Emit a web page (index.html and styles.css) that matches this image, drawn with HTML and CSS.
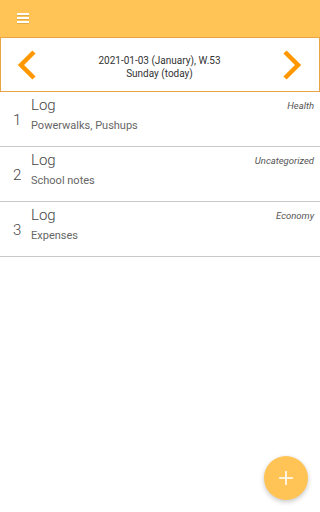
FILE: index.html
```html
<!DOCTYPE html>
<html>
<head>
<meta charset="utf-8">
<link rel="stylesheet" href="styles.css">
</head>
<body>
<header class="appbar">
  <span class="menu"><i></i><i></i><i></i></span>
</header>
<section class="datebar">
  <svg class="chev" width="24" height="32" viewBox="0 0 24 32"><polyline points="19,3 6,16 19,29" fill="none" stroke="#FF9800" stroke-width="4.5"/></svg>
  <div class="date">
    <div>2021-01-03 (January), W.53</div>
    <div>Sunday (today)</div>
  </div>
  <svg class="chev" width="24" height="32" viewBox="0 0 24 32"><polyline points="5,3 18,16 5,29" fill="none" stroke="#FF9800" stroke-width="4.5"/></svg>
</section>
<ul class="list">
  <li class="item">
    <span class="num">1</span>
    <div class="body">
      <div class="title">Log</div>
      <div class="sub">Powerwalks, Pushups</div>
    </div>
    <span class="cat">Health</span>
  </li>
  <li class="item">
    <span class="num">2</span>
    <div class="body">
      <div class="title">Log</div>
      <div class="sub">School notes</div>
    </div>
    <span class="cat">Uncategorized</span>
  </li>
  <li class="item">
    <span class="num">3</span>
    <div class="body">
      <div class="title">Log</div>
      <div class="sub">Expenses</div>
    </div>
    <span class="cat">Economy</span>
  </li>
</ul>
<button class="fab"><svg width="14" height="14" viewBox="0 0 14 14"><path d="M7 0V14M0 7H14" stroke="#fff" stroke-width="1.6"/></svg></button>
</body>
</html>
```
FILE: styles.css
```css
* { box-sizing: border-box; }
html, body { margin: 0; padding: 0; }
body {
  width: 320px;
  height: 512px;
  background: #fff;
  font-family: Roboto, "Liberation Sans", sans-serif;
  position: relative;
  overflow: hidden;
}
.appbar {
  height: 37px;
  background: #FFC455;
  display: flex;
  align-items: center;
  padding-left: 17px;
}
.menu {
  display: flex;
  flex-direction: column;
  gap: 2.5px;
  margin-top: -1px;
}
.menu i {
  display: block;
  width: 12px;
  height: 1.5px;
  background: #fff;
  box-shadow: 0 1px 0 rgba(0,0,0,0.12);
}
.datebar {
  height: 55px;
  border: 1.5px solid #E9A445;
  border-top-width: 1px;
  display: flex;
  align-items: center;
  justify-content: space-between;
  padding: 0 15px 0 14px;
}
.date {
  text-align: center;
  font-size: 10px;
  line-height: 13px;
  color: #333;
  padding-top: 4px;
}
.chev { display: block; }
.list {
  list-style: none;
  margin: 0;
  padding: 0;
}
.item {
  height: 55px;
  border-bottom: 1px solid #c8c8c8;
  display: flex;
  position: relative;
  padding: 4px 6px 0 13px;
}
.num {
  font-size: 15px;
  font-weight: 300;
  color: #444;
  width: 18px;
  padding-top: 15px;
}
.body { flex: 1; }
.title {
  font-size: 15px;
  font-weight: 300;
  color: #444;
  line-height: 18px;
}
.sub {
  font-size: 11px;
  color: #666;
  margin-top: 5px;
}
.cat {
  font-size: 9.5px;
  font-style: italic;
  color: #555;
  padding-top: 4px;
}
.fab {
  position: absolute;
  left: 264px;
  top: 456px;
  width: 44px;
  height: 44px;
  border-radius: 50%;
  border: none;
  background: #FFC455;
  box-shadow: 0 2px 5px rgba(0,0,0,0.22);
  display: flex;
  align-items: center;
  justify-content: center;
  padding: 0;
}
```
